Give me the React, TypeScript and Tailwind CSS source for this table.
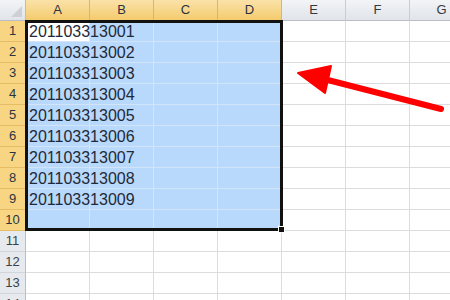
const COLS = ["A", "B", "C", "D", "E", "F", "G"];
const ROWS = Array.from({ length: 14 }, (_, i) => i + 1);
const SEL_COLS = 4;
const SEL_ROWS = 10;

const values: Record<number, string> = {};
for (let r = 1; r <= 9; r++) values[r] = `20110331300${r}`;

function ColHeader({ label, selected }: { label: string; selected: boolean }) {
  return (
    <div
      className={
        selected
          ? "w-[64px] shrink-0 h-[21px] flex items-center justify-center border-r border-b border-r-[#e0b758] border-b-[#c9a050] bg-gradient-to-b from-[#fae2a8] to-[#f4cb6c] text-[#2a3340]"
          : "w-[64px] shrink-0 h-[21px] flex items-center justify-center border-r border-b border-r-[#c9cdd3] border-b-[#b9bec6] bg-gradient-to-b from-[#f2f4f6] to-[#e1e4e9] text-[#33393f]"
      }
    >
      {label}
    </div>
  );
}

function RowHeader({ n, selected }: { n: number; selected: boolean }) {
  return (
    <div
      className={
        selected
          ? "w-[26px] shrink-0 h-[21px] flex items-center justify-center border-r border-b border-r-[#c9a050] border-b-[#e3bc63] bg-[#f7d583] text-[#2a3340]"
          : "w-[26px] shrink-0 h-[21px] flex items-center justify-center border-r border-b border-r-[#b9bec6] border-b-[#d2d6db] bg-[#e6e9ed] text-[#3b4149]"
      }
    >
      {n}
    </div>
  );
}

function Cell({ row, col }: { row: number; col: number }) {
  const inSel = row <= SEL_ROWS && col < SEL_COLS;
  const active = row === 1 && col === 0;
  let cls = "w-[64px] shrink-0 h-[21px] border-r border-b ";
  if (active) cls += "bg-white border-[#d4e4f6]";
  else if (inSel) cls += "bg-[#b8d8fc] border-[#d2e4f8]";
  else cls += "bg-white border-[#dadcdd]";
  const text = col === 0 ? values[row] : undefined;
  return (
    <div className={cls}>
      {text && (
        <span className="relative z-10 block whitespace-nowrap pl-[3px] leading-[21px] text-[16px] text-[#1f2a38]">
          {text}
        </span>
      )}
    </div>
  );
}

export default function App() {
  return (
    <div className="relative w-[450px] h-[300px] overflow-hidden bg-white font-['Liberation_Sans',Arial,sans-serif]">
      {/* column headers */}
      <div className="flex text-[13px]">
        <div className="relative w-[26px] shrink-0 h-[21px] border-r border-b border-[#b9bec6] bg-gradient-to-b from-[#f2f4f6] to-[#e1e4e9]">
          <svg className="absolute right-[3px] bottom-[3px]" width="11" height="11" viewBox="0 0 11 11">
            <polygon points="11,0 11,11 0,11" fill="#cdd1d6" />
          </svg>
        </div>
        {COLS.map((c, i) => (
          <ColHeader key={c} label={c} selected={i < SEL_COLS} />
        ))}
      </div>

      {/* rows */}
      {ROWS.map((r) => (
        <div key={r} className="flex">
          <div className="text-[13px]">
            <RowHeader n={r} selected={r <= SEL_ROWS} />
          </div>
          {COLS.map((c, i) => (
            <Cell key={c} row={r} col={i} />
          ))}
        </div>
      ))}

      {/* selection outline + fill handle */}
      <div className="absolute left-[25px] top-[20px] w-[258px] h-[211px] border-[3px] border-[#111] z-20 pointer-events-none" />
      <div className="absolute left-[278px] top-[226px] w-[7px] h-[7px] bg-[#111] border border-white z-30" />

      {/* red arrow */}
      <svg className="absolute inset-0 z-40" width="450" height="300" viewBox="0 0 450 300">
        <line x1="441" y1="109" x2="320" y2="78" stroke="#ff0000" strokeWidth="6" strokeLinecap="round" />
        <polygon points="298,73 331,66 325,93" fill="#ff0000" stroke="#ff0000" strokeWidth="2" strokeLinejoin="round" />
      </svg>
    </div>
  );
}
